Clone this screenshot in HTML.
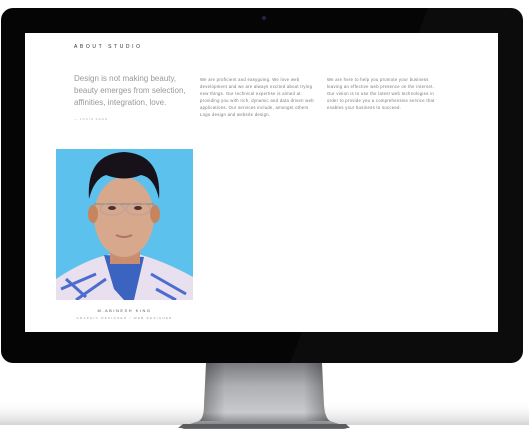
<!DOCTYPE html>
<html><head><style>
html,body{margin:0;padding:0;background:#fff;width:529px;height:439px;overflow:hidden;position:relative;font-family:"Liberation Sans",sans-serif}
.abs{position:absolute}
.body{left:1px;top:8px;width:522px;height:355px;background:#050506;border-radius:12px}
.screen{left:25px;top:33px;width:473px;height:299px;background:#fff}
.t{color:#777;font-size:4.2px;line-height:7px;letter-spacing:0.3px}
</style></head><body>
<svg class="abs" style="left:0;top:0" width="529" height="439">
<defs>
<linearGradient id="sh" x1="0" y1="0" x2="0" y2="1"><stop offset="0" stop-color="#fff" stop-opacity="0"/><stop offset="1" stop-color="#d4d4d4"/></linearGradient>
<linearGradient id="st" x1="0" y1="0" x2="0" y2="1"><stop offset="0" stop-color="#7a7c80"/><stop offset="0.35" stop-color="#aeb0b4"/><stop offset="0.75" stop-color="#c9cacd"/><stop offset="1" stop-color="#6c6d70"/></linearGradient>
<linearGradient id="sx" x1="0" y1="0" x2="1" y2="0"><stop offset="0" stop-color="#000" stop-opacity=".35"/><stop offset=".2" stop-color="#000" stop-opacity="0"/><stop offset=".8" stop-color="#000" stop-opacity="0"/><stop offset="1" stop-color="#000" stop-opacity=".35"/></linearGradient>
</defs>
<rect x="0" y="400" width="529" height="25" fill="url(#sh)"/>
<path d="M206 363 L322 363 L324 405 Q325 418 330 421 L345 426 Q350 428 344 429 L185 429 Q178 428 184 426 L199 421 Q204 418 204 405 Z" fill="url(#st)"/>
<path d="M206 363 L322 363 L324 405 Q325 418 330 421 L199 421 Q204 418 204 405 Z" fill="url(#sx)"/>
<path d="M183 424 L346 424 L350 428 L178 428 Z" fill="#5c5d60"/>
</svg>
<div class="abs body"></div>
<svg class="abs" style="left:0;top:0" width="529" height="439"><path d="M428 8 L510 8 Q523 8 523 20 L523 363 L290 363 Z" fill="#fff" opacity=".03"/></svg>
<div class="abs" style="left:262px;top:16px;width:4px;height:4px;border-radius:50%;background:#2a2050"></div>
<div class="abs screen"></div>
<div class="abs" style="left:74px;top:44px;font-size:5px;letter-spacing:2.6px;color:#333">ABOUT STUDIO</div>
<div class="abs" style="left:74px;top:73px;width:112px;font-size:8px;line-height:12px;color:#999">Design is not making beauty, beauty emerges from selection, affinities, integration, love.</div>
<div class="abs" style="left:74px;top:117px;font-size:3px;letter-spacing:1px;color:#aaa">— LOUIS KAHN</div>
<div class="abs t" style="left:200px;top:76px;width:114px">We are proficient and easygoing. We love web development and we are always excited about trying new things. Our technical expertise is aimed at providing you with rich, dynamic and data driven web applications. Our services include, amongst others Logo design and website design.</div>
<div class="abs t" style="left:327px;top:76px;width:114px">We are here to help you promote your business leaving an effective web presence on the internet. Our vision is to use the latest web technologies in order to provide you a comprehensive service that enables your business to succeed.</div>
<svg class="abs" style="left:56px;top:149px" width="137" height="151">
<rect width="137" height="151" fill="#5dc1ee"/>
<path d="M0 130 Q30 110 55 105 L82 105 Q108 112 137 128 L137 151 L0 151Z" fill="#e8e0ee"/>
<path d="M48 106 L58 140 L68 151 L78 151 L88 108 Z" fill="#3a64c0"/>
<path d="M5 140 L40 125 M20 151 L50 130 M95 125 L130 145 M100 140 L120 151 M10 130 L30 148" stroke="#4c6cd0" stroke-width="3" fill="none"/>
<rect x="54" y="90" width="30" height="25" fill="#c98e6f"/>
<ellipse cx="68" cy="68" rx="30" ry="40" fill="#d7a88b"/>
<ellipse cx="37" cy="65" rx="5" ry="9" fill="#c6855f"/>
<ellipse cx="99" cy="65" rx="5" ry="9" fill="#c6855f"/>
<path d="M33 50 Q30 5 68 3 Q106 5 103 50 Q98 28 85 26 Q68 33 50 26 Q38 30 33 50Z" fill="#17121a"/>
<path d="M38 55 L98 55" stroke="#9a8a88" stroke-width="1.2"/>
<ellipse cx="56" cy="60" rx="12" ry="6" fill="none" stroke="#b0a0a0" stroke-width="0.8"/>
<ellipse cx="82" cy="60" rx="12" ry="6" fill="none" stroke="#b0a0a0" stroke-width="0.8"/>
<ellipse cx="56" cy="59" rx="4" ry="2" fill="#4a3030"/>
<ellipse cx="82" cy="59" rx="4" ry="2" fill="#4a3030"/>
<path d="M60 86 Q68 90 76 86" stroke="#b07070" stroke-width="2" fill="none"/>
</svg>
<div class="abs" style="left:56px;top:308px;width:137px;text-align:center;font-size:4px;letter-spacing:1.5px;color:#555">M.ABINESH KING</div>
<div class="abs" style="left:56px;top:316px;width:137px;text-align:center;font-size:3px;letter-spacing:1.3px;color:#999">GRAPHIC DESIGNER / WEB DESIGNER</div>
</body></html>
